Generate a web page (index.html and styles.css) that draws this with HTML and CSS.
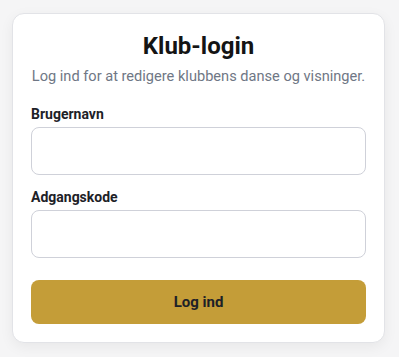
FILE: index.html
```html
<!DOCTYPE html>
<html lang="da">
<head>
<meta charset="utf-8">
<link rel="stylesheet" href="styles.css">
</head>
<body>
<main class="card">
  <h1 class="title">Klub-login</h1>
  <p class="subtitle">Log ind for at redigere klubbens danse og visninger.</p>
  <form class="form">
    <label class="field">
      <span class="label">Brugernavn</span>
      <input class="input" type="text">
    </label>
    <label class="field">
      <span class="label">Adgangskode</span>
      <input class="input" type="password">
    </label>
    <button class="button" type="button">Log ind</button>
  </form>
</main>
</body>
</html>
```
FILE: styles.css
```css
html, body { margin: 0; }
body {
  background: #f5f5f6;
  font-family: Roboto, "Noto Sans", sans-serif;
  padding: 13px 14px 14px 12px;
}
.card {
  background: #fff;
  border: 1px solid #e2e3e7;
  border-radius: 12px;
  box-shadow: 0 4px 14px rgba(0,0,0,0.06);
  padding: 18px 18px 18px 18px;
}
.title {
  margin: 0;
  text-align: center;
  font-size: 24px;
  line-height: 28px;
  font-weight: 700;
  color: #141414;
}
.subtitle {
  margin: 6px -4px 0;
  text-align: center;
  white-space: nowrap;
  font-size: 14.6px;
  line-height: 20px;
  color: #6f7785;
}
.form {
  display: flex;
  flex-direction: column;
  margin-top: 19px;
}
.field { display: flex; flex-direction: column; margin-bottom: 13px; }
.label {
  font-size: 14px;
  font-weight: 700;
  color: #1d2127;
  line-height: 19px;
  margin-bottom: 3px;
}
.input {
  box-sizing: border-box;
  height: 48px;
  border: 1px solid #cfd1d9;
  border-radius: 8px;
  background: #fff;
  font: inherit;
}
.button {
  margin-top: 9px;
  height: 44px;
  border: none;
  border-radius: 8px;
  background: #c49d38;
  color: #1d2127;
  font: inherit;
  font-size: 15px;
  font-weight: 700;
}
```
